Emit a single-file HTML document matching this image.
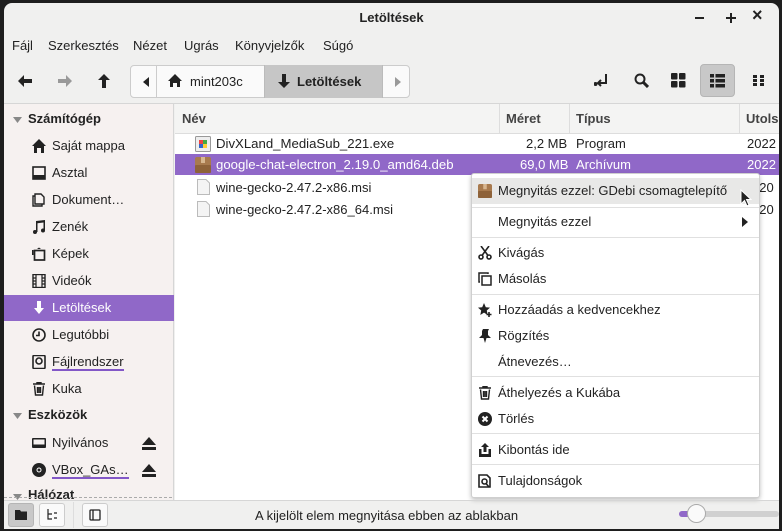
<!DOCTYPE html>
<html><head><meta charset="utf-8"><style>
*{margin:0;padding:0;box-sizing:border-box}
body{width:782px;height:531px;background:#1e1e1e;font-family:"Liberation Sans","DejaVu Sans",sans-serif;font-size:13px;color:#222;position:relative;overflow:hidden}
.win{position:absolute;left:4px;top:3px;width:775px;height:526px;background:#f0f0ef;border-radius:8px 8px 0 0;overflow:hidden}
.abs{position:absolute;white-space:nowrap}
.title{left:0;right:0;top:0;height:30px;text-align:center;line-height:29px;font-weight:bold;font-size:13px}
.menu span{position:absolute;top:35px}
.side{left:0;top:101px;width:170px;height:396px;background:#f6f1f0;border-right:1px solid #d6d6d6}
.main{left:171px;top:101px;width:604px;height:396px;background:#fff}
.hdr{top:101px;height:30px;background:#f4f4f3;border-bottom:1px solid #ddd;font-weight:bold;line-height:30px;color:#444}
.item{position:absolute;left:0;width:170px;height:26px;line-height:26px;padding-left:48px}
.ic{position:absolute;left:28px;top:6px;width:14px;height:14px}
.cm{left:467px;top:170px;width:289px;height:325px;background:#fff;border:1px solid #cfcfcf;box-shadow:0 2px 5px rgba(0,0,0,.25);border-radius:3px}
.cm .r{position:absolute;left:0;right:0;height:26px;line-height:26px;padding-left:26px}
.cm .s{position:absolute;left:0;right:0;height:1px;background:#e0e0e0}
.mi{position:absolute;left:6px;top:6px;width:14px;height:14px}
</style></head><body>
<div class="win">
<div class="abs title">Letöltések</div>
<div class="abs" style="left:691px;top:14px;width:9px;height:2px;background:#222"></div>
<div class="abs" style="left:722px;top:14px;width:10px;height:2px;background:#222"></div>
<div class="abs" style="left:726px;top:10px;width:2px;height:10px;background:#222"></div>
<div class="abs" style="left:748px;top:2px;font-size:18px;font-weight:bold">×</div>
<div class="menu"><span style="left:8px">Fájl</span><span style="left:44px">Szerkesztés</span><span style="left:129px">Nézet</span><span style="left:180px">Ugrás</span><span style="left:231px">Könyvjelzők</span><span style="left:319px">Súgó</span></div>
<svg class="abs" style="left:14px;top:72px" width="14" height="12"><path d="M0 6L6 0V4H14V8H6V12Z" fill="#222"/></svg>
<svg class="abs" style="left:54px;top:72px" width="14" height="12"><path d="M14 6L8 0V4H0V8H8V12Z" fill="#999"/></svg>
<svg class="abs" style="left:94px;top:71px" width="12" height="14"><path d="M6 0L12 6H8V14H4V6H0Z" fill="#222"/></svg>
<div class="abs" style="left:126px;top:62px;width:280px;height:33px;border:1px solid #ccc;border-radius:4px;background:#fafafa"></div>
<div class="abs" style="left:152px;top:62px;width:1px;height:33px;background:#ccc"></div>
<svg class="abs" style="left:139px;top:74px" width="6" height="10"><path d="M6 0V10L0 5Z" fill="#222"/></svg>
<svg class="abs" style="left:164px;top:71px" width="14" height="13"><path d="M7 0L14 7H12V13H9V9H5V13H2V7H0Z" fill="#222"/></svg>
<div class="abs" style="left:186px;top:71px">mint203c</div>
<div class="abs" style="left:260px;top:62px;width:119px;height:33px;background:#c6c6c6;border-left:1px solid #bbb;border-right:1px solid #bbb"></div>
<svg class="abs" style="left:274px;top:71px" width="12" height="14"><path d="M4 0H8V8H12L6 14L0 8H4Z" fill="#222"/></svg>
<div class="abs" style="left:293px;top:71px;font-weight:bold">Letöltések</div>
<svg class="abs" style="left:391px;top:74px" width="6" height="10"><path d="M0 0V10L6 5Z" fill="#999"/></svg>
<svg class="abs" style="left:590px;top:71px" width="16" height="14" fill="none" stroke="#222" stroke-width="2"><path d="M12 0V9H5M7 6L4 9L7 12"/><circle cx="1.5" cy="10" r="1" fill="#222"/></svg>
<svg class="abs" style="left:630px;top:70px" width="15" height="15" fill="none" stroke="#222" stroke-width="2"><circle cx="6" cy="6" r="4.5"/><path d="M9 9L14 14" stroke-width="3"/></svg>
<svg class="abs" style="left:667px;top:70px" width="15" height="15" fill="#222"><rect width="6.5" height="6.5" rx="1"/><rect x="8" width="6.5" height="6.5" rx="1"/><rect y="8" width="6.5" height="6.5" rx="1"/><rect x="8" y="8" width="6.5" height="6.5" rx="1"/></svg>
<div class="abs" style="left:696px;top:61px;width:35px;height:33px;background:#c8c8c8;border:1px solid #b5b5b5;border-radius:4px"></div>
<svg class="abs" style="left:706px;top:71px" width="15" height="14" fill="#222"><rect width="4" height="3.5"/><rect x="5.5" width="9.5" height="3.5"/><rect y="5" width="4" height="3.5"/><rect x="5.5" y="5" width="9.5" height="3.5"/><rect y="10" width="4" height="3.5"/><rect x="5.5" y="10" width="9.5" height="3.5"/></svg>
<svg class="abs" style="left:749px;top:72px" width="12" height="11" fill="#222"><rect width="4" height="3"/><rect x="7" width="4" height="3"/><rect y="4" width="4" height="3"/><rect x="7" y="4" width="4" height="3"/><rect y="8" width="4" height="3"/><rect x="7" y="8" width="4" height="3"/></svg>
<div class="abs" style="left:0;top:100px;width:775px;height:1px;background:#d6d6d6"></div>
<div class="abs side">
<svg class="abs" style="left:9px;top:13px" width="9" height="6"><path d="M0 0H9L4.5 6Z" fill="#888"/></svg>
<div class="abs" style="left:24px;top:7px;font-weight:bold">Számítógép</div>
<div class="item" style="top:29px"><svg class="ic" viewBox="0 0 14 14"><path d="M7 0L14 7H12V14H9V9H5V14H2V7H0Z" fill="#222"/></svg>Saját mappa</div>
<div class="item" style="top:56px"><svg class="ic" viewBox="0 0 14 14"><rect x="1" y="1" width="12" height="12" fill="none" stroke="#222" stroke-width="1.6"/><rect x="1" y="9" width="12" height="4" fill="#222"/></svg>Asztal</div>
<div class="item" style="top:83px"><svg class="ic" viewBox="0 0 14 14" fill="none" stroke="#222" stroke-width="1.4"><path d="M3 3H1V13H10V11M3 1H9L12 4V11H3Z"/></svg>Dokument…</div>
<div class="item" style="top:110px"><svg class="ic" viewBox="0 0 14 14" fill="#222"><path d="M4 1L13 0V10H11.5V2.5L5.5 3.3V12H4Z"/><circle cx="3" cy="12" r="2"/><circle cx="11" cy="10.5" r="2"/></svg>Zenék</div>
<div class="item" style="top:137px"><svg class="ic" viewBox="0 0 14 14"><rect x="2.5" y="3.5" width="10" height="9.5" fill="none" stroke="#222" stroke-width="1.7"/><path d="M5 2L7 0.5L9 2Z M0 3H1.5V8H0Z" fill="#222"/></svg>Képek</div>
<div class="item" style="top:164px"><svg class="ic" viewBox="0 0 14 14"><rect x="1" y="0.5" width="12" height="13" fill="none" stroke="#222" stroke-width="1.4"/><path d="M4 0.5V13.5M10 0.5V13.5M1 4H4M1 7H4M1 10H4M10 4H13M10 7H13M10 10H13" stroke="#222" stroke-width="1.2"/></svg>Videók</div>
<div class="item" style="top:191px;background:#9068c8;color:#fff"><svg class="ic" viewBox="0 0 14 14"><path d="M5 0H9V7H12L7 13L2 7H5Z" fill="#fff"/></svg>Letöltések</div>
<div class="item" style="top:218px"><svg class="ic" viewBox="0 0 14 14" fill="none" stroke="#222" stroke-width="1.6"><circle cx="7" cy="7" r="6"/><path d="M7 3.5V7.5H4"/></svg>Legutóbbi</div>
<div class="item" style="top:245px"><svg class="ic" viewBox="0 0 14 14"><rect x="1" y="0.5" width="12" height="13" rx="1" fill="none" stroke="#222" stroke-width="1.6"/><circle cx="7" cy="6" r="3" fill="none" stroke="#222" stroke-width="1.6"/></svg><span style="border-bottom:2px solid #8257c7">Fájlrendszer</span></div>
<div class="item" style="top:272px"><svg class="ic" viewBox="0 0 14 14" fill="none" stroke="#222" stroke-width="1.4"><path d="M1 2H13M5 2V0.7H9V2M2.5 3.5L3.5 13H10.5L11.5 3.5M5.5 5V11M7 5V11M8.5 5V11"/></svg>Kuka</div>
<svg class="abs" style="left:9px;top:309px" width="9" height="6"><path d="M0 0H9L4.5 6Z" fill="#888"/></svg>
<div class="abs" style="left:24px;top:303px;font-weight:bold">Eszközök</div>
<div class="item" style="top:326px"><svg class="ic" viewBox="0 0 14 14"><rect x="0" y="2" width="14" height="10" rx="1" fill="#222"/><rect x="1.5" y="3.5" width="11" height="5" fill="#f6f1f0"/></svg>Nyilvános</div>
<svg class="abs" style="left:138px;top:333px" width="14" height="13" fill="#222"><path d="M7 0L14 8H0Z"/><rect y="10" width="14" height="3"/></svg>
<div class="item" style="top:353px"><svg class="ic" viewBox="0 0 14 14"><circle cx="7" cy="7" r="7" fill="#222"/><circle cx="7" cy="7" r="2" fill="none" stroke="#fff" stroke-width="1"/></svg><span style="border-bottom:2px solid #8257c7">VBox_GAs…</span></div>
<svg class="abs" style="left:138px;top:360px" width="14" height="13" fill="#222"><path d="M7 0L14 8H0Z"/><rect y="10" width="14" height="3"/></svg>
<svg class="abs" style="left:9px;top:390px" width="9" height="6"><path d="M0 0H9L4.5 6Z" fill="#888"/></svg>
<div class="abs" style="left:24px;top:383px;font-weight:bold">Hálózat</div>
<div class="abs" style="left:0;top:393px;width:168px;border-top:1px dashed #aaa"></div>
</div>
<div class="abs main"></div>
<div class="abs hdr" style="left:171px;width:325px;padding-left:7px;border-right:1px solid #ddd">Név</div>
<div class="abs hdr" style="left:496px;width:70px;padding-left:6px;border-right:1px solid #ddd">Méret</div>
<div class="abs hdr" style="left:566px;width:170px;padding-left:6px;border-right:1px solid #ddd">Típus</div>
<div class="abs hdr" style="left:736px;width:39px;padding-left:6px">Utols</div>
<div class="abs" style="left:171px;top:151px;width:604px;height:21px;background:#9068c8"></div>
<svg class="abs" style="left:191px;top:133px" width="16" height="16"><rect x="0.5" y="0.5" width="15" height="15" rx="1" fill="#eee" stroke="#999"/><rect x="4" y="4" width="4" height="4" fill="#e44"/><rect x="8" y="4" width="4" height="4" fill="#4a4"/><rect x="4" y="8" width="4" height="4" fill="#36c"/><rect x="8" y="8" width="4" height="4" fill="#fc3"/></svg>
<div class="abs" style="left:212px;top:133px;font-size:13.2px">DivXLand_MediaSub_221.exe</div>
<div class="abs" style="left:522px;top:133px">2,2 MB</div>
<div class="abs" style="left:572px;top:133px">Program</div>
<div class="abs" style="left:743px;top:133px">2022</div>
<svg class="abs" style="left:191px;top:154px" width="16" height="16"><rect width="16" height="16" rx="2" fill="#a87a4e"/><rect y="8" width="16" height="8" rx="1" fill="#8e6239"/><rect x="6" y="0" width="4" height="6" fill="#d7b690"/></svg>
<div class="abs" style="left:212px;top:154px;color:#fff;font-size:13.2px">google-chat-electron_2.19.0_amd64.deb</div>
<div class="abs" style="left:516px;top:154px;color:#fff">69,0 MB</div>
<div class="abs" style="left:572px;top:154px;color:#fff">Archívum</div>
<div class="abs" style="left:743px;top:154px;color:#fff">2022</div>
<svg class="abs" style="left:193px;top:176px" width="13" height="16"><path d="M0.5 0.5H9L12.5 4V15.5H0.5Z" fill="#f4f4f4" stroke="#bbb"/></svg>
<div class="abs" style="left:212px;top:177px">wine-gecko-2.47.2-x86.msi</div>
<div class="abs" style="left:748px;top:177px">020</div>
<svg class="abs" style="left:193px;top:198px" width="13" height="16"><path d="M0.5 0.5H9L12.5 4V15.5H0.5Z" fill="#f4f4f4" stroke="#bbb"/></svg>
<div class="abs" style="left:212px;top:199px">wine-gecko-2.47.2-x86_64.msi</div>
<div class="abs" style="left:748px;top:199px">020</div>
<div class="abs cm">
<div class="r" style="top:4px;background:#e8e8e7"><svg class="mi" viewBox="0 0 16 16"><rect width="16" height="16" rx="2" fill="#a87a4e"/><rect y="8" width="16" height="8" rx="1" fill="#8e6239"/><rect x="6" width="4" height="6" fill="#d7b690"/></svg>Megnyitás ezzel: GDebi csomagtelepítő</div>
<div class="s" style="top:33px"></div>
<div class="r" style="top:35px">Megnyitás ezzel</div>
<svg class="abs" style="left:270px;top:43px" width="6" height="10"><path d="M0 0V10L6 5Z" fill="#222"/></svg>
<div class="s" style="top:63px"></div>
<div class="r" style="top:66px"><svg class="mi" viewBox="0 0 14 14" fill="none" stroke="#222" stroke-width="1.6"><circle cx="3" cy="11" r="2"/><circle cx="11" cy="11" r="2"/><path d="M4 9.5L11 0M10 9.5L3 0"/></svg>Kivágás</div>
<div class="r" style="top:92px"><svg class="mi" viewBox="0 0 14 14" fill="none" stroke="#222" stroke-width="1.5"><rect x="4" y="4" width="9" height="9"/><path d="M2 10H1V1H10V2"/></svg>Másolás</div>
<div class="s" style="top:120px"></div>
<div class="r" style="top:123px"><svg class="mi" viewBox="0 0 14 14"><path d="M6 0L7.8 4.2L12 4.6L8.8 7.5L9.7 12L6 9.6L2.3 12L3.2 7.5L0 4.6L4.2 4.2Z" fill="#222"/><path d="M11 9V14M8.5 11.5H13.5" stroke="#222" stroke-width="1.6"/></svg>Hozzáadás a kedvencekhez</div>
<div class="r" style="top:149px"><svg class="mi" viewBox="0 0 14 14" fill="#222"><path d="M5 0H11L10 2V6L13 9H8.5L7 14L5.5 9H1L4 6V2Z"/></svg>Rögzítés</div>
<div class="r" style="top:175px">Átnevezés…</div>
<div class="s" style="top:202px"></div>
<div class="r" style="top:206px"><svg class="mi" viewBox="0 0 14 14" fill="none" stroke="#222" stroke-width="1.4"><path d="M1 2H13M5 2V0.7H9V2M2.5 3.5L3.5 13H10.5L11.5 3.5M5.5 5V11M7 5V11M8.5 5V11"/></svg>Áthelyezés a Kukába</div>
<div class="r" style="top:232px"><svg class="mi" viewBox="0 0 14 14"><circle cx="7" cy="7" r="7" fill="#222"/><path d="M4.5 4.5L9.5 9.5M9.5 4.5L4.5 9.5" stroke="#fff" stroke-width="2"/></svg>Törlés</div>
<div class="s" style="top:259px"></div>
<div class="r" style="top:263px"><svg class="mi" viewBox="0 0 14 14" fill="#222"><path d="M7 0L11 4H8.5V9H5.5V4H3Z"/><path d="M1 6H3.5V11H10.5V6H13V14H1Z"/></svg>Kibontás ide</div>
<div class="s" style="top:290px"></div>
<div class="r" style="top:294px"><svg class="mi" viewBox="0 0 14 14" fill="none" stroke="#222" stroke-width="1.6"><path d="M1 1H9L12 4V13H1Z"/><circle cx="6.5" cy="7.5" r="2.5"/><path d="M8 9.5L11 13"/></svg>Tulajdonságok</div>
</div>
<svg class="abs" style="left:736px;top:186px" width="12" height="18"><path d="M1 1V15L4.5 11.5L7 17L9 16L6.5 10.5H11Z" fill="#222" stroke="#fff" stroke-width="1"/></svg>
<div class="abs" style="left:0;top:497px;width:775px;height:1px;background:#d6d6d6"></div>
<div class="abs" style="left:4px;top:500px;width:26px;height:24px;background:#c8c8c8;border:1px solid #b5b5b5;border-radius:3px"></div>
<svg class="abs" style="left:11px;top:507px" width="12" height="10" fill="#222"><path d="M0 0H5L6 1.5H12V10H0Z"/></svg>
<div class="abs" style="left:35px;top:500px;width:26px;height:24px;background:#fafafa;border:1px solid #ccc;border-radius:3px"></div>
<svg class="abs" style="left:42px;top:506px" width="12" height="12" fill="none" stroke="#222" stroke-width="1.2"><path d="M2 0V10H6M2 5H6M8 4H11M8 9H11"/></svg>
<div class="abs" style="left:69px;top:499px;width:1px;height:26px;background:#ddd"></div>
<div class="abs" style="left:78px;top:500px;width:26px;height:24px;background:#fafafa;border:1px solid #ccc;border-radius:3px"></div>
<svg class="abs" style="left:85px;top:506px" width="12" height="12" fill="none" stroke="#222" stroke-width="1.3"><rect x="1" y="1" width="10" height="10" rx="1"/><path d="M4 1V11"/></svg>
<div class="abs" style="left:251px;top:505px">A kijelölt elem megnyitása ebben az ablakban</div>
<div class="abs" style="left:675px;top:508px;width:100px;height:6px;background:#d0d0d0;border-radius:3px"></div>
<div class="abs" style="left:675px;top:508px;width:15px;height:6px;background:#9068c8;border-radius:3px"></div>
<div class="abs" style="left:683px;top:501px;width:19px;height:19px;background:#fafafa;border:1px solid #aaa;border-radius:50%"></div>
</div>
</body></html>
